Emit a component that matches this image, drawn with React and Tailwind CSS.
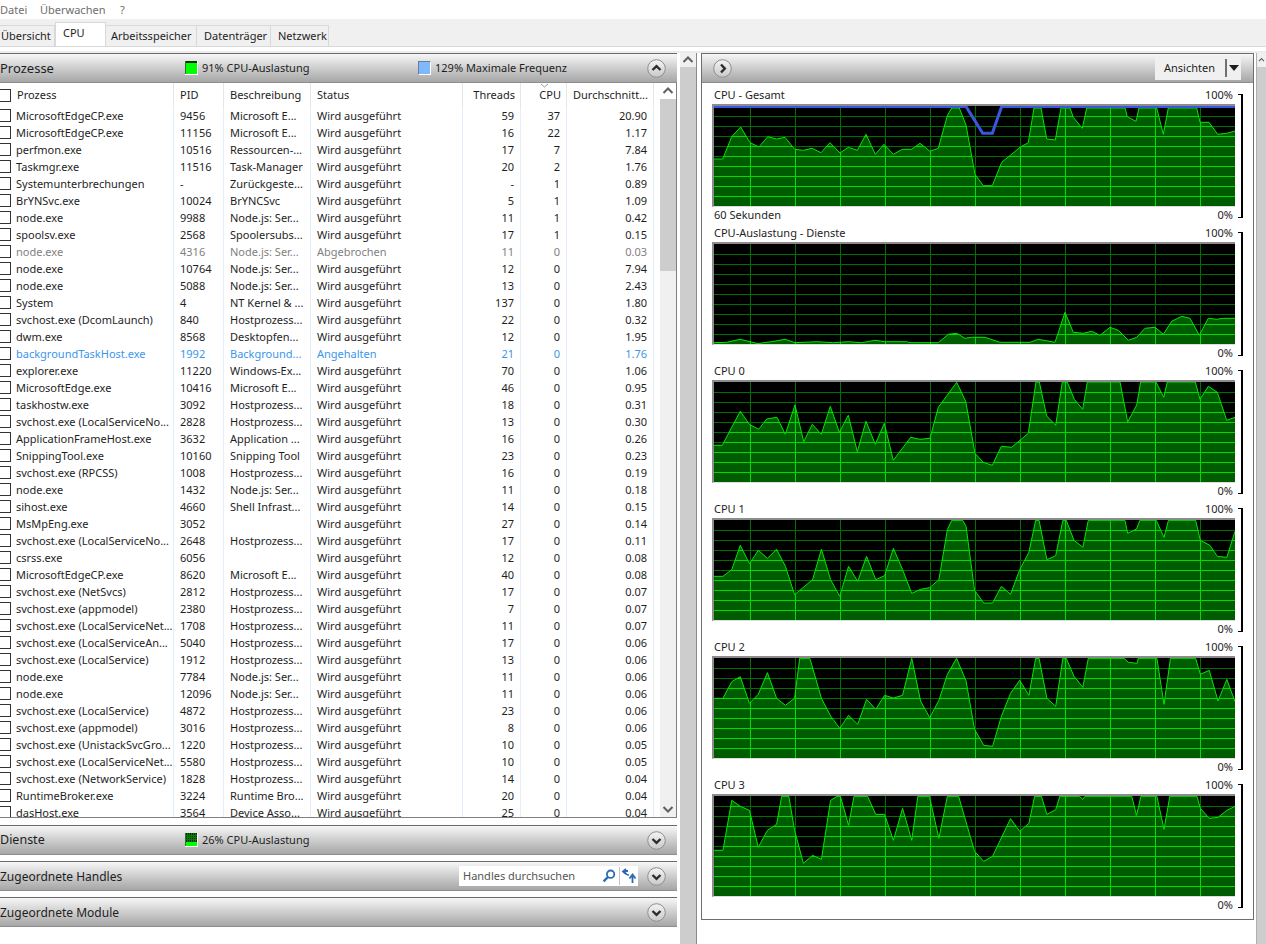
const font = { fontFamily: '"Noto Sans", sans-serif' }

const tabs = [
  { label: 'Übersicht', w: 'w-[55px]', pl: 'pl-[1px]' },
  { label: 'CPU', w: 'w-[51px]', pl: 'pl-[7px]', active: true },
  { label: 'Arbeitsspeicher', w: 'w-[91px]', pl: 'pl-[5px]' },
  { label: 'Datenträger', w: 'w-[74px]', pl: 'pl-[7px]' },
  { label: 'Netzwerk', w: 'w-[58px]', pl: 'pl-[7px]' },
]

const RUN = 'Wird ausgeführt'
const HOST = 'Hostprozess...'
const NODE = 'Node.js: Ser...'
const EDGE = 'Microsoft E...'

const rows = [
  ['MicrosoftEdgeCP.exe', '9456', EDGE, RUN, '59', '37', '20.90'],
  ['MicrosoftEdgeCP.exe', '11156', EDGE, RUN, '16', '22', '1.17'],
  ['perfmon.exe', '10516', 'Ressourcen-...', RUN, '17', '7', '7.84'],
  ['Taskmgr.exe', '11516', 'Task-Manager', RUN, '20', '2', '1.76'],
  ['Systemunterbrechungen', '-', 'Zurückgeste...', RUN, '-', '1', '0.89'],
  ['BrYNSvc.exe', '10024', 'BrYNCSvc', RUN, '5', '1', '1.09'],
  ['node.exe', '9988', NODE, RUN, '11', '1', '0.42'],
  ['spoolsv.exe', '2568', 'Spoolersubs...', RUN, '17', '1', '0.15'],
  ['node.exe', '4316', NODE, 'Abgebrochen', '11', '0', '0.03', 'gray'],
  ['node.exe', '10764', NODE, RUN, '12', '0', '7.94'],
  ['node.exe', '5088', NODE, RUN, '13', '0', '2.43'],
  ['System', '4', 'NT Kernel & ...', RUN, '137', '0', '1.80'],
  ['svchost.exe (DcomLaunch)', '840', HOST, RUN, '22', '0', '0.32'],
  ['dwm.exe', '8568', 'Desktopfen...', RUN, '12', '0', '1.95'],
  ['backgroundTaskHost.exe', '1992', 'Background...', 'Angehalten', '21', '0', '1.76', 'blue'],
  ['explorer.exe', '11220', 'Windows-Ex...', RUN, '70', '0', '1.06'],
  ['MicrosoftEdge.exe', '10416', EDGE, RUN, '46', '0', '0.95'],
  ['taskhostw.exe', '3092', HOST, RUN, '18', '0', '0.31'],
  ['svchost.exe (LocalServiceNo...', '2828', HOST, RUN, '13', '0', '0.30'],
  ['ApplicationFrameHost.exe', '3632', 'Application ...', RUN, '16', '0', '0.26'],
  ['SnippingTool.exe', '10160', 'Snipping Tool', RUN, '23', '0', '0.23'],
  ['svchost.exe (RPCSS)', '1008', HOST, RUN, '16', '0', '0.19'],
  ['node.exe', '1432', NODE, RUN, '11', '0', '0.18'],
  ['sihost.exe', '4660', 'Shell Infrast...', RUN, '14', '0', '0.15'],
  ['MsMpEng.exe', '3052', '', RUN, '27', '0', '0.14'],
  ['svchost.exe (LocalServiceNo...', '2648', HOST, RUN, '17', '0', '0.11'],
  ['csrss.exe', '6056', '', RUN, '12', '0', '0.08'],
  ['MicrosoftEdgeCP.exe', '8620', EDGE, RUN, '40', '0', '0.08'],
  ['svchost.exe (NetSvcs)', '2812', HOST, RUN, '17', '0', '0.07'],
  ['svchost.exe (appmodel)', '2380', HOST, RUN, '7', '0', '0.07'],
  ['svchost.exe (LocalServiceNet...', '1708', HOST, RUN, '11', '0', '0.07'],
  ['svchost.exe (LocalServiceAn...', '5040', HOST, RUN, '17', '0', '0.06'],
  ['svchost.exe (LocalService)', '1912', HOST, RUN, '13', '0', '0.06'],
  ['node.exe', '7784', NODE, RUN, '11', '0', '0.06'],
  ['node.exe', '12096', NODE, RUN, '11', '0', '0.06'],
  ['svchost.exe (LocalService)', '4872', HOST, RUN, '23', '0', '0.06'],
  ['svchost.exe (appmodel)', '3016', HOST, RUN, '8', '0', '0.06'],
  ['svchost.exe (UnistackSvcGro...', '1220', HOST, RUN, '10', '0', '0.05'],
  ['svchost.exe (LocalServiceNet...', '5580', HOST, RUN, '10', '0', '0.05'],
  ['svchost.exe (NetworkService)', '1828', HOST, RUN, '14', '0', '0.04'],
  ['RuntimeBroker.exe', '3224', 'Runtime Bro...', RUN, '20', '0', '0.04'],
  ['dasHost.exe', '3564', 'Device Asso...', RUN, '25', '0', '0.04'],
]

// chart curves, in page pixels
const gesamt = [[714,159],[722.7,159],[731.7,136.7],[740.7,127],[750,142.7],[759,147],[767.7,136.7],[776.7,139],[785,137.3],[794.7,149.3],[803.3,150.3],[812,148.3],[821,152.7],[830,142.7],[840,153],[848.3,147.3],[857.3,150.3],[866,134.3],[875.3,154.3],[884,144.3],[893.3,154.3],[902.3,149.3],[911.7,149.3],[920,143.3],[930,151.3],[938.3,148.3],[947.3,115.7],[951.7,108],[959.3,108],[966,125],[975,174.3],[983.3,185.7],[992.3,185.7],[1001.7,162.3],[1010.7,155],[1020,147.3],[1028.3,142.7],[1034,108],[1041,108],[1046.7,139],[1055.3,140],[1061,108],[1070,108],[1073.3,117.3],[1082.3,128.3],[1086.7,108],[1125,108],[1127.3,116.7],[1136,121.3],[1139,108],[1156.7,108],[1163.3,134.3],[1168.3,108],[1196.7,108],[1200,122.3],[1209,122.3],[1217.7,134.3],[1226.7,133.3],[1235,131]]
const maxFreq = [[714,106.5],[966,106.5],[982.7,133.3],[992.3,133.3],[1001.7,106.5],[1235,106.5]]
const dienste = [[714,342.7],[726.7,342.3],[740,339.3],[750,341.7],[758.3,343.7],[763.3,342.7],[771.7,341.7],[785,339.3],[795,342.7],[816.7,341.7],[833.3,342.7],[848.3,341.7],[861.7,342.7],[875,340.3],[885,341.7],[906.7,341.7],[910,342.7],[938.3,342.7],[948.3,334.3],[956.7,333.3],[965,338.3],[971.7,337.3],[985,337.3],[1000,342.3],[1030,342.3],[1038.3,339.3],[1055,342.3],[1065,312.3],[1073.3,332.3],[1083.3,333.3],[1091.7,331.3],[1100,335.3],[1110,327.3],[1118.3,330.3],[1128.3,340.3],[1136.7,337.3],[1145,328.3],[1155,327.3],[1163.3,334.3],[1171.7,321.3],[1181.7,316.3],[1190,318.3],[1199.3,335.3],[1208.3,318.3],[1216.7,319.3],[1223.3,318.3],[1235,318.3]]
const cpu0 = [[714,445.3],[722.3,445.3],[731.7,427.3],[740.3,411.3],[749.3,424.3],[758.7,429.3],[766.7,419],[777,417.3],[785.3,434.3],[795,405],[803.7,441.7],[812.3,424.3],[821.3,434.3],[830.3,406.3],[839.3,432.3],[848.3,415.3],[857.3,451.7],[866,421.3],[875.3,444.3],[884.3,423.3],[893.3,460.3],[910.7,437.3],[920,439.3],[930,438.3],[938.3,407.3],[956.7,382.3],[965.7,401.3],[975,453.3],[983.3,462.3],[992.3,465.3],[1001.3,446.3],[1011.7,447.3],[1028.3,433.3],[1036,382],[1039.3,382],[1046.7,416],[1055.7,425.3],[1062.3,382],[1067.3,382],[1074.3,399.3],[1082.7,409.3],[1087.3,382],[1120,382],[1127.7,422],[1136.7,405],[1140.7,382],[1156,382],[1163.7,397.3],[1167.3,382],[1195.3,382],[1200,399.3],[1208.3,386.3],[1217.3,392.3],[1226.7,420.3],[1235,417.3]]

// traced off 3x crops of the lower three graphs
const traced = (pts, cropTop) => pts.map(([x, y]) => [708 + x / 2.945, cropTop + y / 3])

const cpu1 = traced([[18,190],[44,190],[70,170],[95,97],[122,152],[148,112],[175,136],[202,109],[228,160],[255,245],[308,200],[334,109],[361,200],[388,250],[414,160],[441,205],[467,130],[494,200],[520,188],[546,106],[573,170],[600,241],[626,229],[653,224],[680,200],[705,50],[718,22],[750,22],[760,40],[785,232],[812,270],[838,270],[864,220],[891,244],[918,170],[945,118],[965,22],[975,22],[998,140],[1024,128],[1045,22],[1055,22],[1078,82],[1104,103],[1120,22],[1228,22],[1236,61],[1262,48],[1272,22],[1320,22],[1343,73],[1356,22],[1436,22],[1450,82],[1478,97],[1500,130],[1528,133],[1552,55]], 513)
const cpu2 = traced([[18,142],[44,142],[70,92],[95,77],[122,157],[148,130],[175,65],[202,142],[228,163],[255,142],[270,22],[300,22],[334,142],[361,195],[388,232],[414,193],[441,220],[467,145],[494,175],[520,133],[546,141],[573,133],[600,22],[626,150],[653,200],[680,148],[705,70],[732,22],[760,90],[785,235],[812,283],[838,286],[864,196],[891,127],[918,88],[945,133],[965,22],[975,22],[998,142],[1024,166],[1045,22],[1055,22],[1078,76],[1104,109],[1120,22],[1225,22],[1238,34],[1264,37],[1267,22],[1322,22],[1343,160],[1362,22],[1436,22],[1450,70],[1476,58],[1502,150],[1528,85],[1552,152]], 651)
const cpu3 = traced([[18,184],[44,184],[70,34],[95,52],[122,64],[148,175],[175,124],[202,106],[217,22],[238,22],[255,124],[281,223],[308,199],[334,211],[361,34],[380,22],[390,22],[414,109],[430,22],[470,22],[494,76],[520,76],[546,154],[573,58],[600,154],[618,22],[652,22],[680,148],[705,22],[738,22],[785,187],[812,217],[838,202],[891,89],[918,127],[945,103],[962,22],[982,22],[998,76],[1024,62],[1036,22],[1094,22],[1104,31],[1110,22],[1248,22],[1262,79],[1275,22],[1322,22],[1343,121],[1360,22],[1440,22],[1450,58],[1476,88],[1502,85],[1528,64],[1552,52]], 789)

const charts = [
  { id: 'gesamt', title: 'CPU - Gesamt', top: 106, pts: gesamt, overlay: maxFreq, footer: '60 Sekunden' },
  { id: 'dienste', title: 'CPU-Auslastung - Dienste', top: 244, pts: dienste },
  { id: 'cpu0', title: 'CPU 0', top: 382, pts: cpu0 },
  { id: 'cpu1', title: 'CPU 1', top: 520, pts: cpu1 },
  { id: 'cpu2', title: 'CPU 2', top: 658, pts: cpu2 },
  { id: 'cpu3', title: 'CPU 3', top: 796, pts: cpu3 },
]

const gridX = [750, 795, 840, 885, 930, 975, 1020, 1065, 1110, 1155, 1200]
const gridY = [10, 20, 30, 40, 50, 60, 70, 80, 90]

function Graph({ id, top, pts, overlay }) {
  const line = pts.map((p) => p.join(',')).join(' ')
  const area = `714,${top + 100} ${line} 1235,${top + 100}`
  const grid = (stroke) => (
    <g stroke={stroke} strokeWidth="1">
      {gridY.map((y) => <line key={y} x1="714" x2="1235" y1={top + y + 0.5} y2={top + y + 0.5} />)}
      {gridX.map((x) => <line key={x} x1={x + 0.5} x2={x + 0.5} y1={top} y2={top + 100} />)}
    </g>
  )
  return (
    <svg width="521" height="100" viewBox={`714 ${top} 521 100`} className="block bg-black">
      <defs>
        <clipPath id={id}><polygon points={area} /></clipPath>
      </defs>
      {grid('#007000')}
      <polygon points={area} fill="#005c00" />
      <g clipPath={`url(#${id})`}>{grid('#00dc00')}</g>
      <polyline points={line} fill="none" stroke="#00e800" strokeWidth="1" />
      {overlay && <polyline points={overlay.map((p) => p.join(',')).join(' ')} fill="none" stroke="#3a57e2" strokeWidth="3" />}
    </svg>
  )
}

function ChartBlock({ chart }) {
  return (
    <div className="flex h-[138px]">
      <div className="w-[526px]">
        <div className="flex h-[18px] items-center justify-between pl-[2px] pr-[5px]">
          <span>{chart.title}</span>
          <span>100%</span>
        </div>
        <div className="w-[523px] border-t-2 border-l-2 border-b border-t-[#8c8c8c] border-l-[#8c8c8c] border-b-[#dedede]">
          <Graph {...chart} />
        </div>
        <div className="flex h-[17px] items-center justify-between pl-[2px] pr-[5px]">
          <span>{chart.footer}</span>
          <span>0%</span>
        </div>
      </div>
      <div className="mt-[8px] h-[124px] w-[5px] border-y border-r-2 border-black" />
    </div>
  )
}

function RoundButton({ dir }) {
  const d = {
    up: 'M5.5 11 L9.5 7.2 L13.5 11',
    down: 'M5.5 8 L9.5 11.8 L13.5 8',
    right: 'M8 5.5 L11.8 9.5 L8 13.5',
  }[dir]
  return (
    <svg width="19" height="19" viewBox="0 0 19 19" className="block shrink-0">
      <defs>
        <linearGradient id="rb" x1="0" y1="0" x2="0" y2="1">
          <stop offset="0" stopColor="#f4f4f4" />
          <stop offset="1" stopColor="#c8c8c8" />
        </linearGradient>
      </defs>
      <circle cx="9.5" cy="9.5" r="8.8" fill="url(#rb)" stroke="#8e8e8e" />
      <path d={d} fill="none" stroke="#2c2c2c" strokeWidth="2.4" />
    </svg>
  )
}

function Swatch({ filled }) {
  // filled = how many pixel rows of bright green sit at the bottom
  const dark = 13 - filled
  return (
    <svg width="13" height="14" viewBox="0 0 13 14" className="shrink-0" shapeRendering="crispEdges">
      <rect width="13" height="14" fill="#fff" />
      <rect width="12" height="13" fill="#00ff00" />
      <rect width="12" height={dark} fill="#0a300a" />
      {dark > 2 && [2, 4, 6, 8, 10].map((x) => <rect key={x} x={x} width="1" height={dark} fill="#0b7a0b" />)}
      {dark > 2 && [2, 4, 6].map((y) => <rect key={y} y={y} width="12" height="1" fill="#0b7a0b" />)}
      <rect width="1" height="13" fill="#2f6f2f" />
    </svg>
  )
}

function SectionBar({ children }) {
  return (
    <div className="flex h-[30px] items-center border-y border-t-[#6a6a6a] border-b-[#8e8e8e] bg-gradient-to-b from-[#f7f7f7] to-[#a6a6a6]">
      {children}
    </div>
  )
}

function Chevron({ up }) {
  return (
    <svg width="16" height="16" viewBox="0 0 16 16" className="block">
      <path d={up ? 'M3.5 10 L8 5.5 L12.5 10' : 'M3.5 6 L8 10.5 L12.5 6'} fill="none" stroke="#606060" strokeWidth="2" />
    </svg>
  )
}

const cell = 'border-r border-[#e3eefb] h-full overflow-hidden whitespace-nowrap'
const headCell = 'border-r border-[#e6e6e6] h-full flex items-center whitespace-nowrap'
const colClass = 'grid grid-cols-[174px_50px_87px_152px_58px_46px_87px]'

function ProcessRow({ row }) {
  const [name, pid, desc, status, threads, cpu, avg, tone] = row
  const color = tone === 'gray' ? 'text-[#7f7f7f]' : tone === 'blue' ? 'text-[#3b96ec]' : 'text-[#1e1e1e]'
  return (
    <div className={`${colClass} h-[17px] items-center leading-[17px] ${color}`}>
      <div className={`${cell} flex items-center`}>
        <span className="mr-[5px] ml-[-2px] h-[13px] w-[13px] shrink-0 border border-[#333] bg-white" />
        <span>{name}</span>
      </div>
      <div className={`${cell} pl-[6px]`}>{pid}</div>
      <div className={`${cell} pl-[6px]`}>{desc}</div>
      <div className={`${cell} pl-[6px]`}>{status}</div>
      <div className={`${cell} pr-[6px] text-right`}>{threads}</div>
      <div className={`${cell} pr-[6px] text-right`}>{cpu}</div>
      <div className={`${cell} pr-[6px] text-right`}>{avg}</div>
    </div>
  )
}

function ProcessTable() {
  return (
    <div className="flex h-[735px] border-r border-b border-[#808080]">
      <div className="w-[660px] overflow-hidden">
        <div className={`${colClass} h-[24px] text-[#1e1e1e]`}>
          <div className={headCell}>
            <span className="mr-[6px] ml-[-2px] h-[13px] w-[13px] shrink-0 border border-[#333] bg-white" />
            <span>Prozess</span>
          </div>
          <div className={`${headCell} pl-[6px]`}>PID</div>
          <div className={`${headCell} pl-[6px]`}>Beschreibung</div>
          <div className={`${headCell} pl-[6px]`}>Status</div>
          <div className={`${headCell} justify-end pr-[5px]`}>Threads</div>
          <div className={`${headCell} relative justify-end pr-[5px]`}>
            CPU
            <svg width="9" height="5" viewBox="0 0 9 5" className="absolute top-0 left-[19px]">
              <path d="M1 1 L4.5 4 L8 1" fill="none" stroke="#9a9a9a" />
            </svg>
          </div>
          <div className={`${headCell} justify-end pr-[5px]`}>Durchschnitt...</div>
        </div>
        {rows.map((row, i) => <ProcessRow key={i} row={row} />)}
      </div>
      <div className="flex w-[16px] flex-col bg-[#f0f0f0]">
        <div className="flex h-[16px] items-center justify-center bg-white"><Chevron up /></div>
        <div className="h-[172px] bg-[#cdcdcd]" />
        <div className="flex-1" />
        <div className="flex h-[16px] items-center justify-center"><Chevron /></div>
      </div>
    </div>
  )
}

function HandleSearch() {
  return (
    <div className="flex h-[20px] w-[179px] items-center bg-white pl-[4px] text-[#555]">
      <span className="flex-1">Handles durchsuchen</span>
      <svg width="14" height="14" viewBox="0 0 14 14" className="mr-[3px]">
        <circle cx="8.6" cy="5.2" r="3.7" fill="none" stroke="#2a6cb4" strokeWidth="1.8" />
        <path d="M6 8 L1.6 12.4" stroke="#2a6cb4" strokeWidth="2.4" />
      </svg>
      <span className="h-[18px] w-px bg-[#c4c4c4]" />
      <svg width="16" height="16" viewBox="0 0 16 16" className="mx-[1px]">
        <path d="M7 3 L3 3 M5 1 L2 3.5 L5 6" fill="none" stroke="#2a6cb4" strokeWidth="1.8" />
        <path d="M3.5 3.5 C5 7 7 7 8 7" fill="none" stroke="#2a6cb4" strokeWidth="1.4" />
        <path d="M11.5 15 L11.5 8 M8.5 10.5 L11.5 6.5 L14.5 10.5" fill="none" stroke="#2a6cb4" strokeWidth="1.8" />
      </svg>
    </div>
  )
}

export default function App() {
  return (
    <div className="h-[944px] w-[1266px] overflow-hidden bg-white text-[11px] text-[#1e1e1e]" style={font}>
      <div className="flex h-[19px] items-center pt-[1px] text-[#6e6e6e]">
        <span className="w-[40px]">Datei</span>
        <span className="w-[80px]">Überwachen</span>
        <span>?</span>
      </div>

      <div className="flex h-[28px] items-end border-b border-[#d8d8d8] bg-[#f0f0f0]">
        {tabs.map((t) => (
          <div
            key={t.label}
            className={`${t.w} ${t.pl} flex items-center border-r border-[#d9d9d9] ${t.active ? 'h-[24px] border-t border-l bg-white pb-[3px]' : 'h-[21px] border-t'}`}
          >
            {t.label}
          </div>
        ))}
      </div>
      <div className="h-[6px] border-b-2 border-[#ececec]" />

      <div className="flex">
        <div className="w-[677px]">
          <SectionBar>
            <span className="w-[185px] pt-[1px] text-[13px]">Prozesse</span>
            <Swatch filled={11} />
            <span className="ml-[4px] w-[216px]">91% CPU-Auslastung</span>
            <span className="h-[14px] w-[13px] border border-[#6a7f96] border-r-white border-b-white bg-[#7fb9fb]" />
            <span className="ml-[4px] flex-1">129% Maximale Frequenz</span>
            <span className="mr-[11px]"><RoundButton dir="up" /></span>
          </SectionBar>
          <ProcessTable />

          <div className="mt-[7px]">
            <SectionBar>
              <span className="w-[185px] pt-[1px] text-[12.5px]">Dienste</span>
              <Swatch filled={4} />
              <span className="ml-[4px] flex-1">26% CPU-Auslastung</span>
              <span className="mr-[11px]"><RoundButton dir="down" /></span>
            </SectionBar>
          </div>
          <div className="mt-[6px]">
            <SectionBar>
              <span className="flex-1 pt-[1px] text-[12px]">Zugeordnete Handles</span>
              <HandleSearch />
              <span className="mr-[11px] ml-[9px]"><RoundButton dir="down" /></span>
            </SectionBar>
          </div>
          <div className="mt-[6px]">
            <SectionBar>
              <span className="flex-1 pt-[1px] text-[12px]">Zugeordnete Module</span>
              <span className="mr-[11px]"><RoundButton dir="down" /></span>
            </SectionBar>
          </div>
        </div>

        <div className="ml-[3px] flex h-[891px] w-[16px] flex-col bg-[#cdcdcd]">
          <div className="flex h-[14px] items-center justify-center bg-[#f0f0f0]"><Chevron up /></div>
        </div>
        <div className="h-[891px] w-px bg-[#8a8a8a]" />

        <div className="ml-[4px] h-[867px] w-[553px] border border-[#6e6e6e]">
          <div className="flex h-[29px] items-center border-b border-[#8e8e8e] bg-gradient-to-b from-[#f7f7f7] to-[#a6a6a6] pl-[11px]">
            <RoundButton dir="right" />
            <div className="ml-auto mr-[12px] flex h-[23px] w-[86px] items-center bg-[#f0f0f0] pl-[9px]">
              <span className="flex-1">Ansichten</span>
              <span className="h-[18px] w-[2px] bg-[#707070]" />
              <svg width="12" height="6" viewBox="0 0 12 6" className="mx-px">
                <path d="M1 0 H11 L6 6 Z" fill="#1e1e1e" />
              </svg>
            </div>
          </div>
          <div className="pt-[3px] pl-[10px]">
            {charts.map((c) => <ChartBlock key={c.id} chart={c} />)}
          </div>
        </div>

        <div className="ml-[2px] flex h-[891px] w-[10px] flex-col border-l border-[#b0b0b0] bg-[#cdcdcd]">
          <div className="flex h-[14px] items-center bg-[#f0f0f0]"><Chevron up /></div>
        </div>
      </div>
    </div>
  )
}
